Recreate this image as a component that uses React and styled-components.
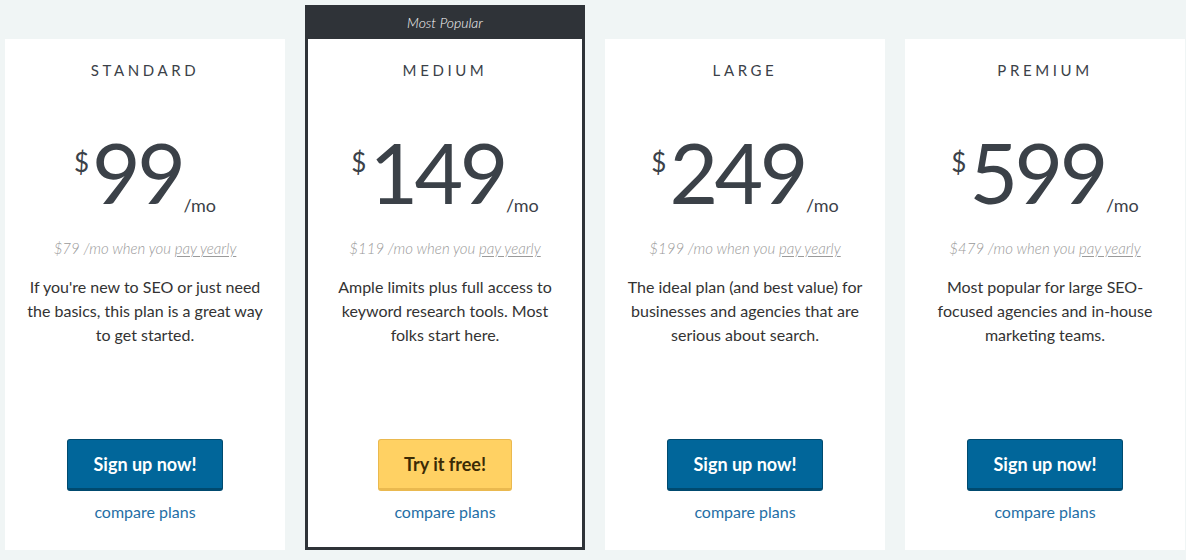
import React from "react";
import styled, { createGlobalStyle } from "styled-components";

const GlobalStyle = createGlobalStyle`
  html, body {
    margin: 0;
    padding: 0;
    background: #f0f5f5;
    font-family: Lato, "Open Sans", Arial, sans-serif;
  }
`;

const Page = styled.div`
  display: flex;
  align-items: flex-end;
  gap: 20px;
  padding: 5px 0 10px 5px;
  width: 1186px;
  height: 560px;
  box-sizing: border-box;
`;

const Card = styled.div`
  width: 280px;
  flex-shrink: 0;
  box-sizing: border-box;
  background: #fff;
  display: flex;
  flex-direction: column;
  border: ${({ featured }) => (featured ? "3px solid #2f3338" : "none")};
`;

const Ribbon = styled.div`
  height: 31px;
  background: #2f3338;
  color: #fafafa;
  font-size: 14px;
  font-style: italic;
  font-weight: 300;
  display: flex;
  align-items: center;
  justify-content: center;
  padding-bottom: 2px;
  box-sizing: border-box;
`;

const Body = styled.div`
  height: ${({ featured }) => (featured ? "508px" : "511px")};
  box-sizing: border-box;
  display: flex;
  flex-direction: column;
  align-items: center;
  text-align: center;
  padding: 21px 20px ${({ featured }) => (featured ? "25px" : "28px")};
`;

const Title = styled.h3`
  margin: 0;
  font-size: 15px;
  line-height: 20px;
  font-weight: 400;
  letter-spacing: 3.6px;
  color: #3b4148;
  text-transform: uppercase;
`;

const Price = styled.div`
  display: flex;
  justify-content: center;
  margin-top: 50px;
  color: #3b4148;
`;

const Dollar = styled.span`
  font-size: 26px;
  line-height: 26px;
  font-weight: 400;
  margin-top: 19px;
  margin-right: 3px;
`;

const Amount = styled.span`
  font-size: 84px;
  line-height: 84px;
  font-weight: 400;
  letter-spacing: -3.5px;
`;

const PerMonth = styled.span`
  align-self: flex-end;
  font-size: 18px;
  line-height: 18px;
  font-weight: 400;
  margin-left: 1px;
`;

const Yearly = styled.p`
  margin: 24px 0 0;
  font-size: 15px;
  line-height: 20px;
  font-style: italic;
  font-weight: 300;
  color: #9a9a9a;

  u {
    text-decoration: underline;
    text-underline-offset: 2px;
  }
`;

const Description = styled.p`
  margin: 17px 0 0;
  flex: 1;
  font-size: 16px;
  line-height: 24px;
  color: #333;
`;

const Button = styled.button`
  height: 52px;
  padding: 0 25px;
  border-radius: 3px;
  font-family: inherit;
  font-size: 18px;
  font-weight: 700;
  cursor: pointer;
  background: ${({ primary }) => (primary ? "#ffd163" : "#01669a")};
  color: ${({ primary }) => (primary ? "#3b2a05" : "#fff")};
  border: 1px solid ${({ primary }) => (primary ? "#eab94f" : "#004a6f")};
  border-bottom-width: 3px;
`;

const Compare = styled.a`
  margin-top: 11px;
  font-size: 16px;
  line-height: 20px;
  color: #1f6fa6;
  text-decoration: none;
`;

const plans = [
  {
    name: "Standard",
    price: 99,
    yearly: 79,
    text: "If you're new to SEO or just need the basics, this plan is a great way to get started.",
  },
  {
    name: "Medium",
    price: 149,
    yearly: 119,
    text: "Ample limits plus full access to keyword research tools. Most folks start here.",
    featured: true,
  },
  {
    name: "Large",
    price: 249,
    yearly: 199,
    text: "The ideal plan (and best value) for businesses and agencies that are serious about search.",
  },
  {
    name: "Premium",
    price: 599,
    yearly: 479,
    text: "Most popular for large SEO-focused agencies and in-house marketing teams.",
  },
];

const App = () => (
  <>
    <GlobalStyle />
    <Page>
      {plans.map((plan) => (
        <Card key={plan.name} featured={plan.featured}>
          {plan.featured && <Ribbon>Most Popular</Ribbon>}
          <Body featured={plan.featured}>
            <Title>{plan.name}</Title>
            <Price>
              <Dollar>$</Dollar>
              <Amount>{plan.price}</Amount>
              <PerMonth>/mo</PerMonth>
            </Price>
            <Yearly>
              ${plan.yearly} /mo when you <u>pay yearly</u>
            </Yearly>
            <Description>{plan.text}</Description>
            <Button primary={plan.featured}>
              {plan.featured ? "Try it free!" : "Sign up now!"}
            </Button>
            <Compare href="#">compare plans</Compare>
          </Body>
        </Card>
      ))}
    </Page>
  </>
);

export default App;
